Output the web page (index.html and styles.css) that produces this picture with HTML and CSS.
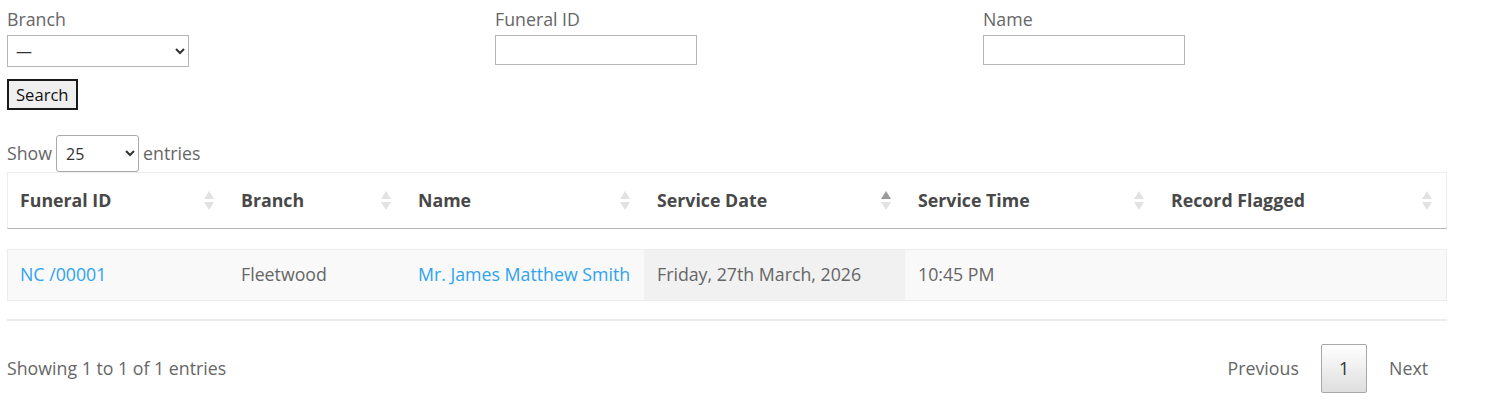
FILE: index.html
```html
<!DOCTYPE html>
<html lang="en">
<head>
<meta charset="utf-8">
<title>Funeral search</title>
<link rel="stylesheet" href="styles.css">
</head>
<body>
<div class="page">
  <form class="filters">
    <div class="field">
      <label class="field-label" for="branch">Branch</label>
      <select id="branch" class="branch-select">
        <option>—</option>
      </select>
    </div>
    <div class="field">
      <label class="field-label" for="fid">Funeral ID</label>
      <input id="fid" class="text-input" type="text">
    </div>
    <div class="field">
      <label class="field-label" for="fname">Name</label>
      <input id="fname" class="text-input" type="text">
    </div>
  </form>
  <button class="search-btn" type="button">Search</button>

  <div class="length">Show <select class="length-select"><option>25</option><option>50</option></select> entries</div>

  <div class="table-wrap">
    <table class="data-table">
      <colgroup>
        <col style="width:221px">
        <col style="width:177px">
        <col style="width:239px">
        <col style="width:261px">
        <col style="width:253px">
        <col style="width:289px">
      </colgroup>
      <thead>
        <tr>
          <th><div class="th-in"><span>Funeral ID</span><span class="sort"><i class="up"></i><i class="down"></i></span></div></th>
          <th><div class="th-in"><span>Branch</span><span class="sort"><i class="up"></i><i class="down"></i></span></div></th>
          <th><div class="th-in"><span>Name</span><span class="sort"><i class="up"></i><i class="down"></i></span></div></th>
          <th><div class="th-in"><span>Service Date</span><span class="sort asc"><i class="up"></i><i class="down"></i></span></div></th>
          <th><div class="th-in"><span>Service Time</span><span class="sort"><i class="up"></i><i class="down"></i></span></div></th>
          <th><div class="th-in"><span>Record Flagged</span><span class="sort"><i class="up"></i><i class="down"></i></span></div></th>
        </tr>
      </thead>
      <tbody>
        <tr>
          <td><a href="#">NC /00001</a></td>
          <td>Fleetwood</td>
          <td><a href="#">Mr. James Matthew Smith</a></td>
          <td class="sorted">Friday, 27th March, 2026</td>
          <td>10:45 PM</td>
          <td></td>
        </tr>
      </tbody>
    </table>
  </div>

  <div class="table-footer">
    <div class="info">Showing 1 to 1 of 1 entries</div>
    <div class="paginate">
      <a class="pg-btn disabled">Previous</a>
      <a class="pg-btn current">1</a>
      <a class="pg-btn disabled">Next</a>
    </div>
  </div>
</div>
</body>
</html>
```
FILE: styles.css
```css
* { box-sizing: border-box; }
html, body { margin: 0; padding: 0; background: #fff; }
body {
  font-family: "Open Sans", "Liberation Sans", sans-serif;
  font-size: 17.75px;
  color: #666;
}
.page { padding: 7px 7px 0; width: 1500px; }

.filters {
  display: grid;
  grid-template-columns: repeat(3, 488px);
}
.field { display: flex; flex-direction: column; align-items: flex-start; }
.field-label { line-height: 24px; margin-bottom: 4px; color: #666; }
.branch-select {
  width: 182px; height: 32px;
  font-family: "Open Sans", sans-serif; font-size: 16px; color: #333;
  border: 1px solid #b5b5b5; border-radius: 0; background: #fff;
  padding: 0 4px;
}
.text-input {
  width: 202px; height: 30px;
  border: 1px solid #b5b5b5; border-radius: 0; background: #fff;
  font-family: "Open Sans", sans-serif; font-size: 16px;
}
.search-btn {
  margin-top: 12px;
  height: 31px; padding: 0 7px;
  font-family: "Open Sans", sans-serif; font-size: 16.6px; color: #111;
  background: #efefef; border: 2px solid #1a1a1a; border-radius: 0;
  line-height: 25px;
}

.length { margin-top: 25px; line-height: 37px; color: #666; display: flex; align-items: center; gap: 4px; }
.length-select {
  width: 83px; height: 37px; padding: 5px;
  font-family: "Open Sans", sans-serif; font-size: 16px; color: #333;
  border: 1px solid #aaa; border-radius: 3px; background: #fff;
}

.table-wrap { width: 1440px; padding-bottom: 18px; border-bottom: 2px solid #ececec; }
.data-table { width: 1440px; table-layout: fixed; border-collapse: separate; border-spacing: 0; }
.data-table th {
  text-align: left; font-weight: 700; color: #484848;
  padding: 15px 14px 15px 13px; line-height: 25px;
  border-top: 1px solid #eee; border-bottom: 1px solid #b5b5b5;
}
.data-table th:first-child { border-left: 1px solid #eee; padding-left: 12px; }
.data-table th:last-child { border-right: 1px solid #eee; }
.th-in { display: flex; justify-content: space-between; align-items: center; }
.sort { display: flex; flex-direction: column; gap: 3px; }
.sort i { display: block; width: 0; height: 0; border-left: 5px solid transparent; border-right: 5px solid transparent; }
.sort .up { border-bottom: 8px solid #e2e2e2; }
.sort .down { border-top: 8px solid #e2e2e2; }
.sort.asc .up { border-bottom-color: #9a9a9a; }

.data-table tbody::before { content: ""; display: block; height: 20px; }
.data-table td {
  background: #f9f9f9; color: #666;
  padding: 12px 13px 13px 13px; line-height: 25px;
  border-top: 1px solid #ececec; border-bottom: 1px solid #ececec;
  white-space: nowrap;
}
.data-table td:first-child { border-left: 1px solid #ececec; padding-left: 12px; }
.data-table td:last-child { border-right: 1px solid #ececec; }
.data-table td.sorted { background: #f1f1f1; }
.data-table a { color: #2ea3f2; text-decoration: none; }

.table-footer {
  width: 1440px; margin-top: 23px;
  display: flex; justify-content: space-between; align-items: center;
}
.info { line-height: 25px; color: #666; }
.paginate { display: flex; align-items: center; }
.pg-btn {
  display: block; padding: 11px 18px; line-height: 25px;
  margin-left: 3px; border: 1px solid transparent; border-radius: 2px;
  color: #666; cursor: default;
}
.pg-btn.current {
  padding: 11px 17px;
  color: #333; border-color: #a8a8a8;
  background: linear-gradient(to bottom, #ffffff 0%, #dedede 100%);
}
```
